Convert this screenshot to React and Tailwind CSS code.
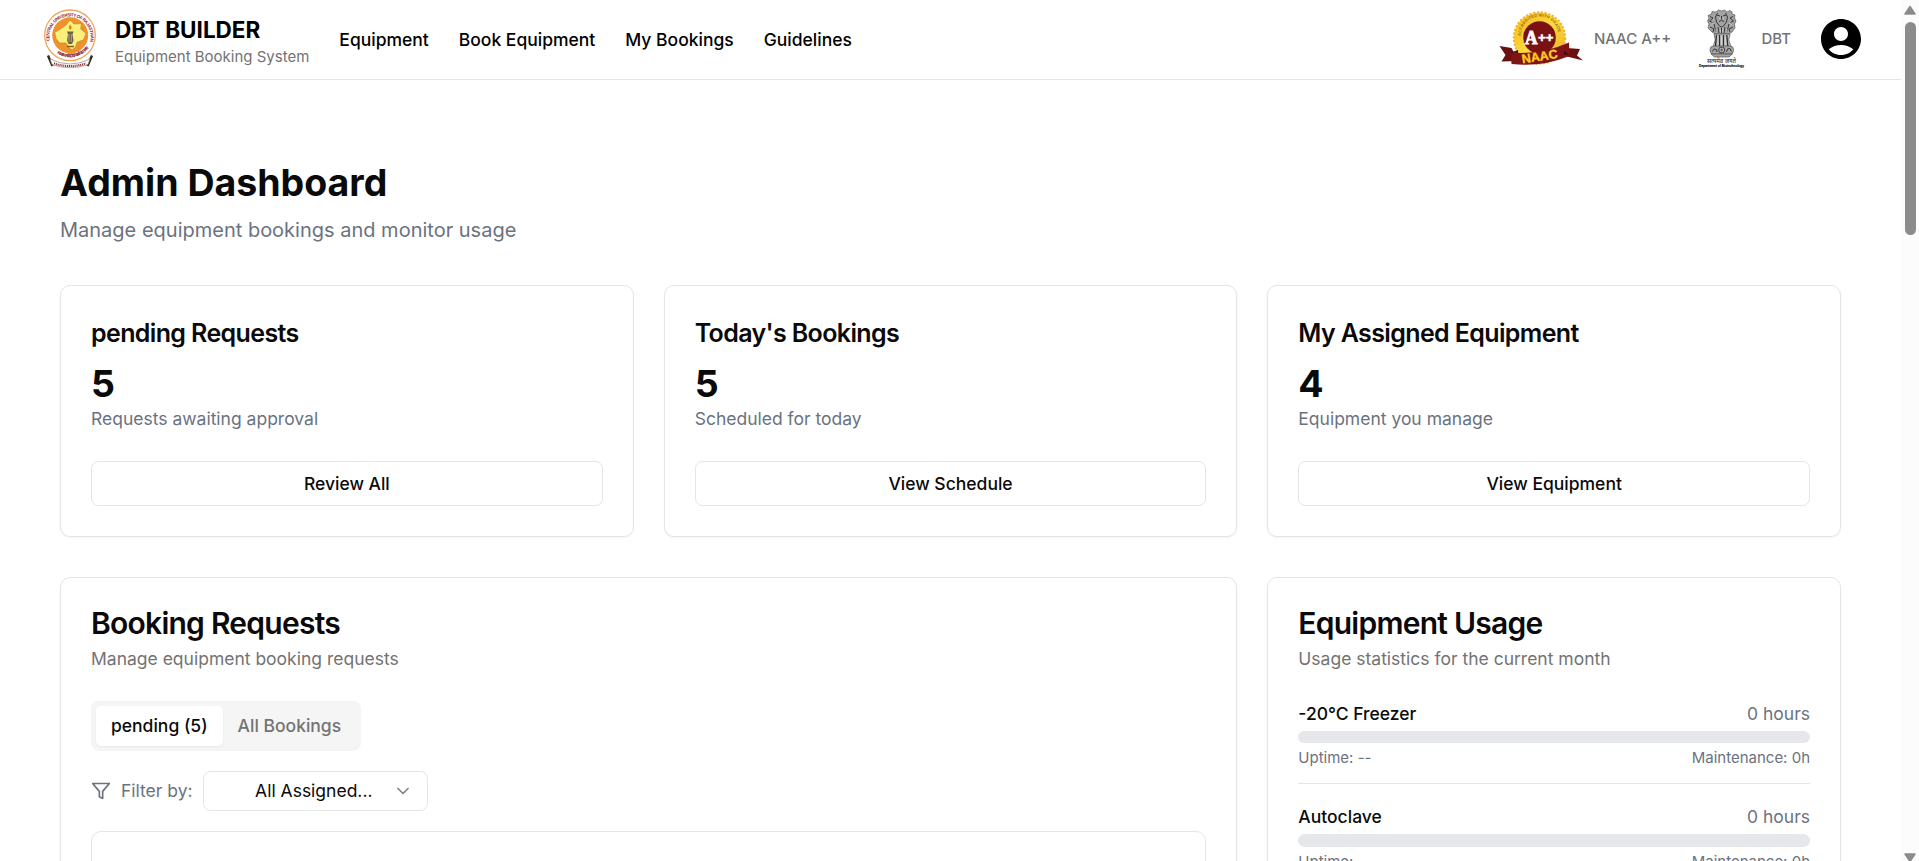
import React from "react";
import { MdAccountCircle } from "react-icons/md";
import { ChevronDown } from "lucide-react";

function UniversityLogo() {
  return (
    <svg width="60" height="60" viewBox="0 0 60 60" className="mb-px shrink-0">
      <defs>
        <path id="uni-top" d="M9.8 32 A20.6 20.6 0 1 1 50.2 32" />
        <path id="uni-bottom" d="M8.5 34 A23.2 23.2 0 0 0 51.5 34" />
      </defs>
      <path d="M8 46.500 L12.500 57 M52 46.500 L47.500 57" stroke="#2f2723" strokeWidth="2.400" />
      <circle cx="30" cy="26.3" r="25.300" fill="#fff" stroke="#efa35c" strokeWidth="1.300" />
      <circle cx="30.200" cy="26.3" r="18" fill="#f0922c" />
      <path
        d="M30 11l4 4 7.500-.5-.8 5.500 5.300 4.300-2.500 6.500-6.500 2.500-1.500 5-3.500 2.700-3.500-3-2.500-4-6.500 0-3.500-4.500-1.300-6 7-4.200 4.300-3.300z"
        fill="#fbee7a"
        stroke="#a9862c"
        strokeWidth=".6"
        strokeLinejoin="round"
      />
      <path d="M30.200 15.500c2 2.400 1.800 4 0 5.500-1.800-1.500-2-3.100 0-5.500z" fill="#ec7c1c" />
      <path d="M27 22.500h6.500l-1 3 1 6-1.500 3.500h-3.500l-1.500-3.500 1-6z" fill="#6a604a" />
      <path d="M29 25v8M31.300 25v8" stroke="#cfc391" strokeWidth=".7" />
      <path d="M27 37.500h7" stroke="#8a5a20" strokeWidth="1.500" />
      <text fontFamily="Liberation Sans, sans-serif" fontSize="4.500" fontWeight="700" fill="#8a3038">
        <textPath href="#uni-top" textLength="73">CENTRAL UNIVERSITY OF RAJASTHAN</textPath>
      </text>
      <text fontFamily="Noto Sans, sans-serif" fontSize="4.800" fontWeight="700" fill="#8a3038">
        <textPath href="#uni-bottom" startOffset="12" textLength="36">राजस्थान केंद्रीय विश्वविद्यालय</textPath>
      </text>
      <path d="M10 50 Q30 60 50 50 L48 55.500 Q30 62 12 55.500Z" fill="#fff" stroke="#8d6a60" strokeWidth=".6" />
      <path d="M14 54.300 Q30 59.800 46 54.300" fill="none" stroke="#8a3038" strokeWidth="2" strokeDasharray="1.100 .8" />
    </svg>
  );
}

function NaacBadge() {
  return (
    <svg width="85" height="60" viewBox="0 0 85 60" className="shrink-0">
      <defs>
        <linearGradient id="naac-gold" x1="0" y1="0" x2="1" y2="1">
          <stop offset="0" stopColor="#f6b51d" />
          <stop offset=".5" stopColor="#fbdc3e" />
          <stop offset="1" stopColor="#eda51a" />
        </linearGradient>
        <path id="naac-arc" d="M21.800 27 A18.800 18.800 0 0 1 59.500 26" />
      </defs>
      <circle cx="40.500" cy="29" r="25.500" fill="url(#naac-gold)" />
      <circle cx="40.500" cy="29" r="25.700" fill="none" stroke="#f3b521" strokeWidth="2" strokeDasharray="2.200 1.600" />
      <circle cx="40.500" cy="28.500" r="16.300" fill="#7a1113" />
      <text fontFamily="Liberation Sans, sans-serif" fontSize="4" fontWeight="700" fill="#a06a12">
        <textPath href="#naac-arc" textLength="56">ACCREDITED WITH GRADE</textPath>
      </text>
      <path d="M.5 37l12 2 7 13-17 .5 4-6.500z" fill="#6b0f10" />
      <path d="M84 51.500l-6-5 3-6.500-13-1-2 8z" fill="#6b0f10" />
      <path d="M12 43.500Q42 46 70 33.500L70.500 47Q42 58.500 12.500 55z" fill="#7e1413" />
      <path d="M12 43.500l7-2.500v3zM70 46.500l-5-1v-4z" fill="#43080a" />
      <text x="26" y="35" fontFamily="Liberation Serif, serif" fontSize="18" fontWeight="700" fill="#fff" stroke="#fff" strokeWidth=".9" textLength="12.500" lengthAdjust="spacingAndGlyphs">A</text>
      <text x="39" y="32.500" fontFamily="Liberation Sans, sans-serif" fontSize="13" fontWeight="700" fill="#fff" stroke="#fff" strokeWidth=".5" textLength="15.500" lengthAdjust="spacingAndGlyphs">++</text>
      <text x="23.500" y="54.500" transform="rotate(-9 23.500 54.500)" fontFamily="Liberation Sans, sans-serif" fontSize="12.500" fontWeight="700" fill="#fccb22" stroke="#fccb22" strokeWidth=".4" textLength="36" lengthAdjust="spacingAndGlyphs">NAAC</text>
    </svg>
  );
}

function StateEmblem() {
  return (
    <svg width="50" height="60" viewBox="0 0 50 60" className="shrink-0">
      <g fill="#a3a3a3" stroke="#444" strokeWidth=".6">
        <path d="M20.500 2.500l2-1.500 3 1 3-1 2.500 2 3-1.500 2 1.500v2l3 1-.5 3 1.500 3-1.500 3 .5 4-3 4-3 2H19l-3-2-4-4 1-4-1.500-3 1.500-3-1-2.500 3.500-1.500.5-2.500 2.500.500z" />
        <path d="M18 25h16l-1.200 6 2 6 1.200 1.500H16l1.200-1.500 2-6z" fill="#bdbdbd" />
        <rect x="14" y="37" width="23.500" height="8" rx="3.500" />
        <path d="M15 45h21.500l-3.500 3H18.500z" />
      </g>
      <g fill="none" stroke="#2c2c2c" strokeWidth=".9">
        <path d="M21 6l3 1M30 6l-3 1M25.500 7v3.500M23 12.500l2.500-1 2.500 1M21.500 4l-2 4 1 5 3 4 2 1 2-1 3-4 1-5-2-4" />
        <path d="M14 7.500l3 1.500-3.500 3 3 1.500M37 7.500l-3 1.500 3.500 3-3 1.500M14 18l4 2-1 3M37 18l-4 2 1 3M18 15l2 8M33 15l-2 8M22 18l1 6M29 18l-1 6M25.500 19v5" />
        <path d="M20.500 26l-1 11M23.500 26v11M27.500 26v11M30.800 26l1 11" strokeWidth="1.300" />
        <circle cx="25.700" cy="41" r="3" fill="#e2e2e2" />
        <path d="M25.700 38v6M22.700 41h6M23.600 39l4.200 4M27.800 39l-4.200 4" strokeWidth=".5" />
        <path d="M16.500 42.500l1.500-2.500 2.500.5.500 2.500M30.500 43l1-3 2.500-.5 1.500 3" />
      </g>
      <g fill="none" stroke="#e9e9e9" strokeWidth=".6">
        <path d="M23 9h1.500M26.500 9H28M15.500 15.500l2-1M35.500 15.500l-2-1M20 20v3M31 20v3M24.300 20.500v3M26.800 20.500v3M22 27v9M25.500 27v9M29.200 27v9" />
      </g>
      <text x="25.500" y="53.800" textAnchor="middle" fontFamily="Noto Sans, sans-serif" fontSize="5.500" fontWeight="500" fill="#333" textLength="29" lengthAdjust="spacingAndGlyphs">सत्यमेव जयते</text>
      <text x="25.500" y="57.600" textAnchor="middle" fontFamily="Liberation Sans, sans-serif" fontSize="3.600" fontWeight="700" fill="#111" stroke="#111" strokeWidth=".15" textLength="45" lengthAdjust="spacingAndGlyphs">Department of Biotechnology</text>
    </svg>
  );
}

function FilterIcon() {
  return (
    <svg width="20" height="20" viewBox="0 0 24 24" fill="none" stroke="currentColor" strokeWidth="2" strokeLinecap="round" strokeLinejoin="round">
      <polygon points="22 3 2 3 10 12.46 10 19 14 21 14 12.46 22 3" />
    </svg>
  );
}

const navItems = ["Equipment", "Book Equipment", "My Bookings", "Guidelines"];

function Header() {
  return (
    <header className="flex h-20 items-center border-b border-[#e5e5e5] pr-9 pl-10">
      <UniversityLogo />
      <div className="ml-[15px] flex flex-col pt-[2px]">
        <span className="text-[22.5px] leading-[30px] font-bold text-black">DBT BUILDER</span>
        <span className="mt-0.5 text-[15px] leading-[20px] text-[#737373]">Equipment Booking System</span>
      </div>
      <nav className="ml-[30px] flex items-center gap-[30px] text-[17.5px] leading-[25px] font-medium text-black">
        {navItems.map((item) => (
          <a key={item} className="whitespace-nowrap">{item}</a>
        ))}
      </nav>
      <div className="ml-auto flex items-center pb-[1px] text-[15px] leading-5 font-medium text-[#737373]">
        <NaacBadge />
        <span className="ml-[10px]">NAAC A++</span>
        <span className="ml-[25px]"><StateEmblem /></span>
        <span className="ml-[15px]">DBT</span>
        <MdAccountCircle size={48} className="ml-[26px] text-black" />
      </div>
    </header>
  );
}

function StatCard({ title, value, note, action }) {
  return (
    <section className="flex flex-col rounded-[10px] border border-[#e5e5e5] bg-white p-[30px] shadow-xs">
      <h2 className="mb-2.5 text-[25px] leading-[35px] font-semibold tracking-[-0.625px]">{title}</h2>
      <p className="text-[37.5px] leading-[45px] font-bold">{value}</p>
      <p className="text-[17.5px] leading-[25px] text-[#6b7280]">{note}</p>
      <button className="mt-[30px] h-[45px] rounded-[7.5px] border border-[#e5e5e5] text-[17.5px] leading-[25px] font-medium">{action}</button>
    </section>
  );
}

function PanelHeader({ title, note }) {
  return (
    <div className="flex flex-col gap-[7.5px] p-[30px]">
      <h2 className="text-[30px] leading-[30px] font-semibold tracking-[-0.75px]">{title}</h2>
      <p className="text-[17.5px] leading-[25px] text-[#737373]">{note}</p>
    </div>
  );
}

function UsageRow({ name }) {
  return (
    <div className="border-b border-[#e5e5e5] pb-[15px]">
      <div className="mb-[5px] flex justify-between text-[17.5px] leading-[25px]">
        <span className="font-medium">{name}</span>
        <span className="text-[#6b7280]">0 hours</span>
      </div>
      <div className="h-[12.5px] rounded-full bg-[#e5e7eb]" />
      <div className="mt-[5px] flex justify-between text-[15px] leading-5 text-[#6b7280]">
        <span>Uptime: --</span>
        <span>Maintenance: 0h</span>
      </div>
    </div>
  );
}

function Scrollbar() {
  return (
    <div className="flex h-full w-[18px] flex-col items-center overflow-hidden bg-[#fcfcfc] pt-[5px]">
      <svg width="12" height="10" viewBox="0 0 12 10" className="shrink-0">
        <path d="M6 1.500L11 9H1z" fill="#8b8b8b" stroke="#8b8b8b" strokeWidth="1.500" strokeLinejoin="round" />
      </svg>
      <div className="mt-[7px] h-[213px] w-[11px] rounded-full bg-[#8b8b8b]" />
      <svg width="12" height="8" viewBox="0 0 12 8" className="mt-auto shrink-0">
        <path d="M6 8.500L1 1h10z" fill="#8b8b8b" stroke="#8b8b8b" strokeWidth="1.500" strokeLinejoin="round" />
      </svg>
    </div>
  );
}

export default function App() {
  return (
    <div className="flex h-[861px] w-full overflow-hidden bg-white font-[Inter,sans-serif] text-[#0a0a0a]">
      <div className="min-w-0 flex-1 overflow-hidden">
        <Header />
        <main className="px-[60px] pt-20">
          <h1 className="text-[37.5px] leading-[45px] font-bold">Admin Dashboard</h1>
          <p className="mt-2.5 text-[20px] leading-[30px] text-[#6b7280]">Manage equipment bookings and monitor usage</p>

          <div className="mt-10 grid grid-cols-3 gap-[30px]">
            <StatCard title="pending Requests" value="5" note="Requests awaiting approval" action="Review All" />
            <StatCard title="Today's Bookings" value="5" note="Scheduled for today" action="View Schedule" />
            <StatCard title="My Assigned Equipment" value="4" note="Equipment you manage" action="View Equipment" />
          </div>

          <div className="mt-10 grid grid-cols-3 gap-[30px]">
            <section className="col-span-2 rounded-[10px] border border-[#e5e5e5] shadow-xs">
              <PanelHeader title="Booking Requests" note="Manage equipment booking requests" />
              <div className="px-[30px] pb-[30px]">
                <div className="inline-flex h-[50px] items-center rounded-[7.5px] bg-[#f5f5f5] p-[5px] align-top text-[17.5px] leading-[25px] font-medium text-[#737373]">
                  <span className="flex h-10 items-center rounded-[5px] bg-white px-[15px] text-[#0a0a0a] shadow-xs">pending (5)</span>
                  <span className="flex h-10 items-center px-[15px]">All Bookings</span>
                </div>
                <div className="mt-5 flex items-center gap-2.5 text-[17.5px] leading-[25px] text-[#6b7280]">
                  <FilterIcon />
                  <span>Filter by:</span>
                  <div className="flex h-10 w-[225px] items-center justify-between rounded-[7.5px] border border-[#e5e5e5] pr-[14px] pl-[51.5px] text-[#0a0a0a]">
                    <span>All Assigned...</span>
                    <ChevronDown size={20} className="opacity-50" />
                  </div>
                </div>
                <div className="mt-5 h-[200px] rounded-[10px] border border-[#e5e5e5]" />
              </div>
            </section>
            <section className="rounded-[10px] border border-[#e5e5e5] shadow-xs">
              <PanelHeader title="Equipment Usage" note="Usage statistics for the current month" />
              <div className="flex flex-col gap-5 px-[30px] pb-[30px]">
                <UsageRow name="-20°C Freezer" />
                <UsageRow name="Autoclave" />
              </div>
            </section>
          </div>
        </main>
      </div>
      <Scrollbar />
    </div>
  );
}
